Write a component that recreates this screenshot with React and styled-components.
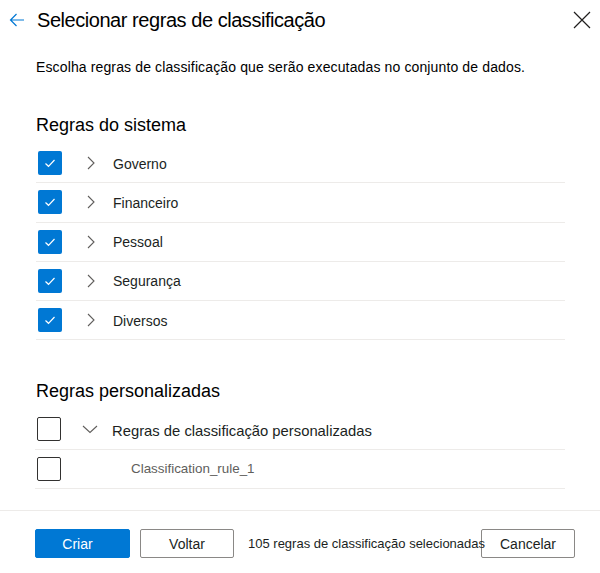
import React from 'react'
import styled, { createGlobalStyle } from 'styled-components'

const GlobalStyle = createGlobalStyle`
  html, body {
    margin: 0;
    padding: 0;
    background: #fff;
  }
  body {
    font-family: "Liberation Sans", Arial, sans-serif;
    color: #201f1e;
  }
`

const Panel = styled.div`
  width: 600px;
  height: 573px;
  display: flex;
  flex-direction: column;
  background: #fff;
  overflow: hidden;
`

const Header = styled.div`
  display: flex;
  align-items: center;
  height: 40px;
  padding: 0 9px;
`

const IconButton = styled.button`
  display: flex;
  align-items: center;
  justify-content: center;
  padding: 0;
  border: none;
  background: transparent;
  cursor: pointer;
  color: ${p => p.color || '#201f1e'};
`

const Title = styled.h1`
  flex: 1;
  margin: 0 0 0 12px;
  font-size: 20px;
  font-weight: 400;
  line-height: 28px;
  letter-spacing: -0.45px;
  color: #000;
`

const Body = styled.div`
  padding: 0 35px 0 36px;
  display: flex;
  flex-direction: column;
`

const Description = styled.p`
  margin: 17px 0 0;
  font-size: 14px;
  line-height: 20px;
  letter-spacing: 0.13px;
  color: #000;
`

const SectionTitle = styled.h2`
  margin: ${p => p.top}px 0 0;
  font-size: 18px;
  font-weight: 400;
  line-height: 24px;
  color: #000;
`

const List = styled.div`
  display: flex;
  flex-direction: column;
  margin-top: ${p => p.top}px;
  margin-left: ${p => p.shift || 0}px;
`

const Row = styled.div`
  display: flex;
  align-items: center;
  height: 38.25px;
  border-bottom: 1px solid #edebe9;
  padding-left: 2px;
`

const Box = styled.span`
  box-sizing: border-box;
  width: 24px;
  height: 24px;
  border-radius: 2px;
  display: flex;
  align-items: center;
  justify-content: center;
  background: ${p => (p.checked ? '#0078d4' : '#fff')};
  border: ${p => (p.checked ? 'none' : '1px solid #323130')};
  flex-shrink: 0;
`

const Toggle = styled.span`
  width: ${p => p.w}px;
  margin-left: ${p => p.gap}px;
  display: flex;
  align-items: center;
  color: #605e5c;
`

const Label = styled.span`
  font-size: ${p => p.size || 14}px;
  color: ${p => (p.sub ? '#605e5c' : '#201f1e')};
  margin-left: ${p => p.left || 0}px;
  padding-top: ${p => p.drop || 0}px;
`

const Footer = styled.div`
  margin-top: auto;
  border-top: 1px solid #edebe9;
  height: 63px;
  display: flex;
  align-items: flex-start;
  padding: 18px 25px 0 35px;
  box-sizing: border-box;
`

const Button = styled.button`
  box-sizing: border-box;
  width: ${p => p.w}px;
  height: 29px;
  border-radius: 2px;
  font-family: "Liberation Sans", Arial, sans-serif;
  font-size: 14px;
  cursor: pointer;
  flex-shrink: 0;
  margin-left: ${p => p.gap || 0}px;
  padding: 0 ${p => (p.primary ? 10 : 0)}px 0 0;
  background: ${p => (p.primary ? '#0078d4' : 'transparent')};
  color: ${p => (p.primary ? '#fff' : '#201f1e')};
  border: 1px solid ${p => (p.primary ? '#0078d4' : '#8a8886')};
`

const Status = styled.span`
  flex: 1;
  min-width: 0;
  margin-left: 14px;
  line-height: 29px;
  font-size: 13px;
  white-space: nowrap;
  color: #201f1e;
  position: relative;
  z-index: 1;
`

const Check = () => (
  <svg width="14" height="14" viewBox="0 0 14 14">
    <polyline points="2.5,7.5 5.5,10.3 11.5,4" fill="none" stroke="#fff" strokeWidth="1.2" />
  </svg>
)

const ChevronRight = () => (
  <svg width="10" height="14" viewBox="0 0 10 14">
    <polyline points="2,1 8,7 2,13" fill="none" stroke="currentColor" strokeWidth="1.1" />
  </svg>
)

const ChevronDown = () => (
  <svg width="16" height="10" viewBox="0 0 16 10">
    <polyline points="1,2 8,8.5 15,2" fill="none" stroke="currentColor" strokeWidth="1.1" />
  </svg>
)

const systemRules = ['Governo', 'Financeiro', 'Pessoal', 'Segurança', 'Diversos']

export default function App() {
  return (
    <Panel>
      <GlobalStyle />
      <Header>
        <IconButton color="#0078d4" aria-label="Voltar">
          <svg width="16" height="16" viewBox="0 0 16 16">
            <path d="M15 8H1.5M7.5 2 1.5 8l6 6" fill="none" stroke="currentColor" strokeWidth="1.2" />
          </svg>
        </IconButton>
        <Title>Selecionar regras de classificação</Title>
        <IconButton aria-label="Fechar">
          <svg width="18" height="18" viewBox="0 0 18 18">
            <path d="M1 1l16 16M17 1 1 17" fill="none" stroke="#201f1e" strokeWidth="1.2" />
          </svg>
        </IconButton>
      </Header>

      <Body>
        <Description>Escolha regras de classificação que serão executadas no conjunto de dados.</Description>

        <SectionTitle top={36}>Regras do sistema</SectionTitle>
        <List top={7}>
          {systemRules.map(name => (
            <Row key={name}>
              <Box checked>
                <Check />
              </Box>
              <Toggle w={10} gap={24}>
                <ChevronRight />
              </Toggle>
              <Label left={17} drop={1}>{name}</Label>
            </Row>
          ))}
        </List>

        <SectionTitle top={39}>Regras personalizadas</SectionTitle>
        <List top={7} shift={-1}>
          <Row>
            <Box />
            <Toggle w={16} gap={21}>
              <ChevronDown />
            </Toggle>
            <Label size={14.8} left={14} drop={4}>Regras de classificação personalizadas</Label>
          </Row>
          <Row>
            <Box />
            <Label sub size={13.4} left={70}>Classification_rule_1</Label>
          </Row>
        </List>
      </Body>

      <Footer>
        <Button primary w={95}>Criar</Button>
        <Button w={94} gap={10}>Voltar</Button>
        <Status>105 regras de classificação selecionadas</Status>
        <Button w={94}>Cancelar</Button>
      </Footer>
    </Panel>
  )
}
